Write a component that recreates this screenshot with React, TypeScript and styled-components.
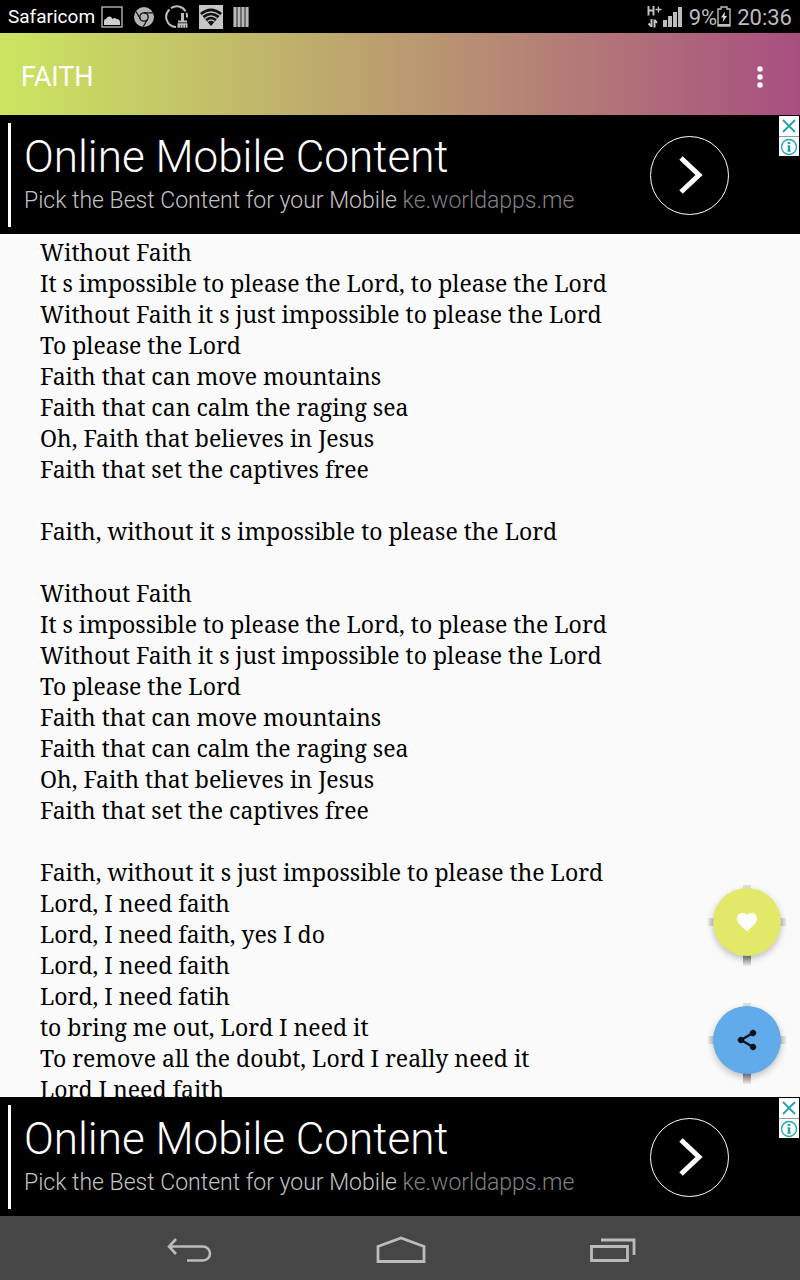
import React from "react";
import styled, { createGlobalStyle } from "styled-components";

const GlobalStyle = createGlobalStyle`
  *, *::before, *::after { box-sizing: border-box; }
  html, body, #root { height: 100%; }
  body {
    margin: 0;
    background: #fafafa;
    font-family: Roboto, "Liberation Sans", sans-serif;
  }
  button {
    margin: 0;
    padding: 0;
    border: 0;
    background: none;
    color: inherit;
    font: inherit;
    cursor: pointer;
  }
  svg { display: block; flex: none; }
`;

const Screen = styled.div`
  display: flex;
  flex-direction: column;
  height: 100vh;
  overflow: hidden;
`;

const StatusBar = styled.div`
  flex: none;
  display: flex;
  align-items: center;
  justify-content: space-between;
  height: 33px;
  padding: 0 8px;
  background: #000;
  color: #bdbdbd;
`;

const StatusGroup = styled.div<{ $gap: number }>`
  display: flex;
  align-items: center;
  gap: ${({ $gap }) => $gap}px;
`;

const Carrier = styled.span`
  color: #fff;
  font-size: 19px;
  line-height: 32px;
`;

const StatusText = styled.span`
  font-size: 22px;
  line-height: 34px;
  padding-top: 2px;
`;

const Notifications = styled.div`
  display: flex;
  align-items: center;
  gap: 10px;
`;

const AppBar = styled.header`
  flex: none;
  display: flex;
  align-items: center;
  justify-content: space-between;
  height: 82px;
  padding: 5px 22px 0 21px;
  background: linear-gradient(90deg, #cbe660 0%, #bb9c70 50%, #a84f80 100%);
  color: #fff;
`;

const Title = styled.h1`
  margin: 0;
  font-size: 27px;
  line-height: 32px;
  font-weight: 400;
`;

const MenuButton = styled.button`
  display: grid;
  place-items: center;
  width: 36px;
  height: 48px;
`;

const Ad = styled.aside`
  position: relative;
  flex: none;
  display: flex;
  align-items: center;
  justify-content: space-between;
  height: 119px;
  padding: 9px 71px 8px 8px;
  background: #000;
`;

const AdLink = styled.a`
  display: block;
  height: 104px;
  padding: 9px 0 0 13px;
  border-left: 3px solid #fff;
  color: #fff;
  text-decoration: none;
  white-space: nowrap;
`;

const AdTitle = styled.div`
  font-size: 44px;
  line-height: 51px;
  font-weight: 300;
`;

const AdText = styled.div`
  color: #c4c4c4;
  font-size: 23px;
  line-height: 36px;
  font-weight: 300;
`;

const AdDomain = styled.span`
  color: #808080;
`;

const AdGo = styled.button`
  display: grid;
  place-items: center;
  width: 79px;
  height: 79px;
  border: 1px solid #fff;
  border-radius: 50%;
  color: #fff;
`;

const AdControls = styled.div`
  position: absolute;
  top: 1px;
  right: 1px;
  display: grid;
  gap: 1px;
  background: #999;
`;

const AdControl = styled.button`
  display: grid;
  place-items: center;
  width: 20px;
  height: 20px;
  background: #fff;
  color: #1fa3ae;

  & + & {
    height: 19px;
  }
`;

const Content = styled.main`
  position: relative;
  flex: 1;
  min-height: 0;
  display: flex;
`;

const Lyrics = styled.div`
  flex: 1;
  overflow-y: auto;
  scrollbar-width: none;
  padding: 1px 40px 0;
  border-top: 2px solid #fff;
  color: #000;
  font-family: "Droid Serif", "Noto Serif", "DejaVu Serif Condensed", serif;
  font-size: 23px;
  line-height: 31px;
  white-space: pre-wrap;
`;

const Actions = styled.div`
  position: absolute;
  right: 19px;
  bottom: 23px;
  display: grid;
  gap: 50px;
`;

const Fab = styled.button<{ $tone: string; $ink: string }>`
  position: relative;
  display: grid;
  place-items: center;
  width: 68px;
  height: 68px;
  border-radius: 50%;
  background: ${({ $tone }) => $tone};
  color: ${({ $ink }) => $ink};
  box-shadow: 0 3px 7px rgba(0, 0, 0, 0.24);

  &::before,
  &::after {
    content: "";
    position: absolute;
    z-index: -1;
  }
  &::before {
    top: -3px;
    bottom: -10px;
    width: 8px;
    background: linear-gradient(rgba(0, 0, 0, 0.1) 85%, rgba(0, 0, 0, 0.5) 87%, rgba(0, 0, 0, 0.05));
  }
  &::after {
    left: -5px;
    right: -5px;
    height: 8px;
    background: linear-gradient(90deg, rgba(0, 0, 0, 0.05), rgba(0, 0, 0, 0.22) 8%, rgba(0, 0, 0, 0.22) 92%, rgba(0, 0, 0, 0.05));
  }
`;

const NavBar = styled.nav`
  flex: none;
  display: flex;
  justify-content: center;
  height: 64px;
  padding-left: 2px;
  background: #464646;
  color: #bbb;
`;

const NavButton = styled.button`
  display: grid;
  place-items: center;
  width: 212px;
  padding-top: 4px;
`;

const lyrics = `Without Faith
It s impossible to please the Lord, to please the Lord
Without Faith it s just impossible to please the Lord
To please the Lord
Faith that can move mountains
Faith that can calm the raging sea
Oh, Faith that believes in Jesus
Faith that set the captives free

Faith, without it s impossible to please the Lord

Without Faith
It s impossible to please the Lord, to please the Lord
Without Faith it s just impossible to please the Lord
To please the Lord
Faith that can move mountains
Faith that can calm the raging sea
Oh, Faith that believes in Jesus
Faith that set the captives free

Faith, without it s just impossible to please the Lord
Lord, I need faith
Lord, I need faith, yes I do
Lord, I need faith
Lord, I need fatih
to bring me out, Lord I need it
To remove all the doubt, Lord I really need it
Lord I need faith`;

const PictureIcon = () => (
  <svg width="22" height="22" viewBox="0 0 22 22">
    <rect x="1" y="1" width="20" height="20" fill="none" stroke="#a6a6a6" strokeWidth="1.5" />
    <path d="M3 19v-4q0-2 2-2 1-3 4-2.500 2 .5 2.500 2.500 2-2 4 0 3 0 3.500 3v3z" fill="#cfcfcf" />
  </svg>
);

const ChromeIcon = () => (
  <svg width="22" height="22" viewBox="0 0 22 22">
    <circle cx="11" cy="11" r="10" fill="#b4b4b4" />
    <circle cx="11" cy="11" r="4.200" fill="#b4b4b4" stroke="#111" strokeWidth="1.300" />
    <path d="M11 6.800h9M7.400 13.100L3 5.500M14.600 13.100L10.200 20.700" stroke="#111" strokeWidth="1.200" />
  </svg>
);

const CleanerIcon = () => (
  <svg width="24" height="24" viewBox="0 0 24 24" fill="none" stroke="#bcbcbc">
    <path d="M11 21.900A10 10 0 0 1 4.500 4.500" strokeWidth="2" />
    <path d="M6 3.200A10 10 0 0 1 20.500 6.200" strokeWidth="2" />
    <path d="M21.400 7.800A10 10 0 0 1 22 12.500" strokeWidth="2" />
    <path d="M17.500 8v8" strokeWidth="3" />
    <path d="M13 16.500h9" strokeWidth="2" />
    <path d="M12.500 20.500h10" strokeWidth="4.500" />
    <path d="M15.500 20v3M18 20v3M20.500 20v3" stroke="#222" strokeWidth=".6" />
  </svg>
);

const WifiIcon = () => (
  <svg width="24" height="24" viewBox="0 0 24 24">
    <rect width="24" height="24" fill="#c6c6c6" />
    <path d="M1 8q11-9 22 0L12 21z" fill="#111" />
    <path d="M3 10.500q9-7 18 0M6 13.500q6-5 12 0M8.500 16.500q3.500-3 7 0" fill="none" stroke="#c6c6c6" strokeWidth="1.300" />
  </svg>
);

const BarsIcon = () => (
  <svg width="16" height="20" viewBox="0 0 16 20">
    <path d="M2 0v20M6 0v20M10 0v20M14 0v20" stroke="#b8b8b8" strokeWidth="3.200" />
  </svg>
);

const DataIcon = () => (
  <svg width="15" height="23" viewBox="0 0 15 23" fill="none" stroke="#c4c4c4">
    <path d="M1.500 1v9.500M6.500 1v9.500M1.500 5.500h5" strokeWidth="1.900" />
    <path d="M8.500 4.500h6M11.500 1.500v6" strokeWidth="1.300" />
    <path d="M4.500 14v8M1.500 18.500l3 3M7.500 22.500v-8M7.500 14.800l2.500 3" strokeWidth="2" />
  </svg>
);

const SignalIcon = () => (
  <svg width="20" height="20" viewBox="0 0 20 20" fill="#bdbdbd">
    <path d="M0 13h4v7H0zM5 9h4v11H5zM10 5h4v15h-4zM15 0h4v20h-4z" />
  </svg>
);

const BatteryIcon = () => (
  <svg width="14" height="21" viewBox="0 0 14 21">
    <path d="M1 3h3V1h6v2h3v17H1z" fill="none" stroke="#bdbdbd" strokeWidth="1.400" />
    <path d="M1 18h12v2H1z" fill="#bdbdbd" />
    <path d="M8 5.500l-4 6h2.500l-1 5 4.500-6.500H7.500z" fill="#ddd" />
  </svg>
);

const MoreIcon = () => (
  <svg width="6" height="22" viewBox="0 0 6 22" fill="currentColor">
    <circle cx="3" cy="3" r="2.700" />
    <circle cx="3" cy="11" r="2.700" />
    <circle cx="3" cy="19" r="2.700" />
  </svg>
);

const HeartIcon = () => (
  <svg width="24" height="24" viewBox="0 0 24 24" fill="currentColor">
    <path d="M12 21.350l-1.450-1.320C5.400 15.360 2 12.280 2 8.500 2 5.420 4.420 3 7.500 3c1.740 0 3.410.81 4.500 2.090C13.090 3.810 14.760 3 16.500 3 19.580 3 22 5.420 22 8.500c0 3.780-3.400 6.860-8.550 11.540z" />
  </svg>
);

const ShareIcon = () => (
  <svg width="24" height="24" viewBox="0 0 24 24" fill="currentColor">
    <path d="M18 16.080c-.76 0-1.440.3-1.960.77L8.910 12.700c.05-.23.09-.46.09-.7s-.04-.47-.09-.7l7.050-4.110c.54.5 1.250.81 2.040.81 1.660 0 3-1.340 3-3s-1.340-3-3-3-3 1.340-3 3c0 .24.04.47.09.7L8.040 9.810C7.500 9.310 6.790 9 6 9c-1.660 0-3 1.340-3 3s1.340 3 3 3c.79 0 1.500-.31 2.040-.81l7.120 4.160c-.05.21-.08.43-.08.65 0 1.610 1.310 2.920 2.920 2.920s2.920-1.310 2.920-2.920-1.310-2.920-2.920-2.920z" stroke="currentColor" strokeWidth=".6" />
  </svg>
);

const AdBanner = () => (
  <Ad aria-label="Advertisement">
    <AdLink href="#ad">
      <AdTitle>Online Mobile Content</AdTitle>
      <AdText>
        Pick the Best Content for your Mobile <AdDomain>ke.worldapps.me</AdDomain>
      </AdText>
    </AdLink>
    <AdGo aria-label="Open advertisement">
      <svg width="26" height="40" viewBox="0 0 26 40" fill="none" stroke="currentColor" strokeWidth="5">
        <path d="M4 3l18 17L4 37" />
      </svg>
    </AdGo>
    <AdControls>
      <AdControl aria-label="Close advertisement">
        <svg width="14" height="14" viewBox="0 0 14 14" stroke="currentColor" strokeWidth="1.800">
          <path d="M1 1l12 12M13 1L1 13" />
        </svg>
      </AdControl>
      <AdControl aria-label="About this advertisement">
        <svg width="18" height="18" viewBox="0 0 18 18" fill="none" stroke="currentColor">
          <circle cx="9" cy="9" r="7.500" strokeWidth="1.300" />
          <path d="M9 4v2" strokeWidth="2.500" />
          <path d="M7.500 8h2M7.200 13h3.800" strokeWidth="1.200" />
          <path d="M9 7.500v6" strokeWidth="2.400" />
        </svg>
      </AdControl>
    </AdControls>
  </Ad>
);

export default function App() {
  return (
    <Screen>
      <GlobalStyle />
      <StatusBar>
        <StatusGroup $gap={6}>
          <Carrier>Safaricom</Carrier>
          <Notifications>
            <PictureIcon />
            <ChromeIcon />
            <CleanerIcon />
            <WifiIcon />
            <BarsIcon />
          </Notifications>
        </StatusGroup>
        <StatusGroup $gap={6}>
          <StatusGroup $gap={1}>
            <DataIcon />
            <SignalIcon />
          </StatusGroup>
          <StatusGroup $gap={0}>
            <StatusText>9%</StatusText>
            <BatteryIcon />
          </StatusGroup>
          <StatusText>20:36</StatusText>
        </StatusGroup>
      </StatusBar>
      <AppBar>
        <Title>FAITH</Title>
        <MenuButton aria-label="More options">
          <MoreIcon />
        </MenuButton>
      </AppBar>
      <AdBanner />
      <Content>
        <Lyrics>{lyrics}</Lyrics>
        <Actions>
          <Fab $tone="#e2e868" $ink="#fff" aria-label="Add to favourites">
            <HeartIcon />
          </Fab>
          <Fab $tone="#62abeb" $ink="#0a0f18" aria-label="Share">
            <ShareIcon />
          </Fab>
        </Actions>
      </Content>
      <AdBanner />
      <NavBar>
        <NavButton aria-label="Back">
          <svg width="46" height="26" viewBox="0 0 46 26" fill="none" stroke="currentColor" strokeWidth="2.600">
            <path d="M10 2L3 9.500 10 17M3 9.500h34a7 7 0 0 1 0 14H21" />
          </svg>
        </NavButton>
        <NavButton aria-label="Home">
          <svg width="50" height="28" viewBox="0 0 50 28" fill="none" stroke="currentColor" strokeWidth="2.800">
            <path d="M2 25.500V10.500L25 2l23 8.500v15z" />
          </svg>
        </NavButton>
        <NavButton aria-label="Recent apps">
          <svg width="46" height="24" viewBox="0 0 46 24" fill="none" stroke="currentColor" strokeWidth="2.800">
            <path d="M1.500 8.500h36v14h-36zM11 2h33v15" />
          </svg>
        </NavButton>
      </NavBar>
    </Screen>
  );
}
